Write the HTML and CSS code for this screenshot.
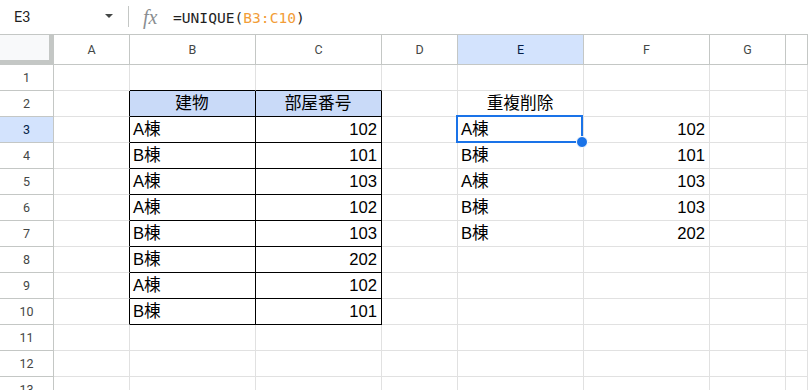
FILE: index.html
```html
<!DOCTYPE html>
<html lang="ja">
<head>
    <meta charset="UTF-8">
    <title>UNIQUE</title>
    <link rel="stylesheet" href="styles.css">
</head>
<body>
    <!-- formula bar -->
    <div class="formula-bar">
        <div class="namebox">
            <span class="cell-ref">E3</span>
            <span class="caret"></span>
        </div>
        <div class="divider"></div>
        <span class="fx">fx</span>
        <span class="formula">=UNIQUE(<span class="ref">B3:C10</span>)</span>
    </div>

    <div class="sheet">
        <div class="corner"></div>
        <div class="colhead">A</div>
        <div class="colhead">B</div>
        <div class="colhead">C</div>
        <div class="colhead">D</div>
        <div class="colhead active">E</div>
        <div class="colhead">F</div>
        <div class="colhead">G</div>
        <div class="colhead"></div>

        <div class="rowhead">1</div>
        <div class="c"></div><div class="c top-edge"></div><div class="c top-edge"></div><div class="c"></div>
        <div class="c"></div><div class="c"></div><div class="c"></div><div class="c"></div>

        <div class="rowhead">2</div>
        <div class="c left-edge"></div><div class="c bd th">建物</div><div class="c bd th">部屋番号</div><div class="c"></div>
        <div class="c center">重複削除</div><div class="c"></div><div class="c"></div><div class="c"></div>

        <div class="rowhead active">3</div>
        <div class="c left-edge"></div><div class="c bd">A棟</div><div class="c bd num">102</div><div class="c"></div>
        <div class="c selected">A棟<div class="sel-box"><span class="handle"></span></div></div><div class="c num">102</div><div class="c"></div><div class="c"></div>

        <div class="rowhead">4</div>
        <div class="c left-edge"></div><div class="c bd">B棟</div><div class="c bd num">101</div><div class="c"></div>
        <div class="c">B棟</div><div class="c num">101</div><div class="c"></div><div class="c"></div>

        <div class="rowhead">5</div>
        <div class="c left-edge"></div><div class="c bd">A棟</div><div class="c bd num">103</div><div class="c"></div>
        <div class="c">A棟</div><div class="c num">103</div><div class="c"></div><div class="c"></div>

        <div class="rowhead">6</div>
        <div class="c left-edge"></div><div class="c bd">A棟</div><div class="c bd num">102</div><div class="c"></div>
        <div class="c">B棟</div><div class="c num">103</div><div class="c"></div><div class="c"></div>

        <div class="rowhead">7</div>
        <div class="c left-edge"></div><div class="c bd">B棟</div><div class="c bd num">103</div><div class="c"></div>
        <div class="c">B棟</div><div class="c num">202</div><div class="c"></div><div class="c"></div>

        <div class="rowhead">8</div>
        <div class="c left-edge"></div><div class="c bd">B棟</div><div class="c bd num">202</div><div class="c"></div>
        <div class="c"></div><div class="c"></div><div class="c"></div><div class="c"></div>

        <div class="rowhead">9</div>
        <div class="c left-edge"></div><div class="c bd">A棟</div><div class="c bd num">102</div><div class="c"></div>
        <div class="c"></div><div class="c"></div><div class="c"></div><div class="c"></div>

        <div class="rowhead">10</div>
        <div class="c left-edge"></div><div class="c bd">B棟</div><div class="c bd num">101</div><div class="c"></div>
        <div class="c"></div><div class="c"></div><div class="c"></div><div class="c"></div>

        <div class="rowhead">11</div>
        <div class="c"></div><div class="c"></div><div class="c"></div><div class="c"></div>
        <div class="c"></div><div class="c"></div><div class="c"></div><div class="c"></div>

        <div class="rowhead">12</div>
        <div class="c"></div><div class="c"></div><div class="c"></div><div class="c"></div>
        <div class="c"></div><div class="c"></div><div class="c"></div><div class="c"></div>

        <div class="rowhead">13</div>
        <div class="c"></div><div class="c"></div><div class="c"></div><div class="c"></div>
        <div class="c"></div><div class="c"></div><div class="c"></div><div class="c"></div>
    </div>
</body>
</html>
```

FILE: styles.css
```css
body {
    margin: 0;
    background: #ffffff;
    font-family: "Liberation Sans", Arial, "Noto Sans CJK JP", sans-serif;
    color: #000;
    overflow: hidden;
}

/* Formula bar */
.formula-bar {
    height: 34px;
    border-bottom: 1px solid #c4c7c5;
    display: flex;
    align-items: center;
}

.namebox {
    width: 128px;
    box-sizing: border-box;
    padding: 0 15px 0 14px;
    display: flex;
    align-items: center;
    justify-content: space-between;
}

.cell-ref {
    font-family: Roboto, "Liberation Sans", sans-serif;
    font-size: 14.5px;
    color: #1f1f1f;
}

.caret {
    width: 0;
    height: 0;
    border-left: 4px solid transparent;
    border-right: 4px solid transparent;
    border-top: 4px solid #444746;
    margin-top: -2px;
}

.divider {
    width: 1px;
    height: 21px;
    background: #c4c7c5;
    margin-top: -1px;
}

.fx {
    font-family: "Liberation Serif", serif;
    font-style: italic;
    font-size: 20px;
    color: #8a8e91;
    margin-left: 14px;
    width: 30px;
}

.formula {
    font-family: "DejaVu Sans Mono", monospace;
    font-size: 14.6px;
    color: #1f1f1f;
}

.ref {
    color: #f29d38;
}

/* Grid */
.sheet {
    display: grid;
    grid-template-columns: 54px 76px 126px 126px 76px 126px 126px 76px 1fr;
    grid-template-rows: 30px repeat(13, 26px);
}

.sheet > div {
    box-sizing: border-box;
}

.corner {
    background: #f8f9fa;
    border-right: 5px solid #c4c7c5;
    border-bottom: 5px solid #c4c7c5;
}

.colhead,
.rowhead {
    font-family: Roboto, "Liberation Sans", sans-serif;
    font-size: 12.5px;
    color: #444746;
    display: flex;
    align-items: center;
    justify-content: center;
    border-right: 1px solid #c4c7c5;
    border-bottom: 1px solid #c4c7c5;
}

.colhead.active,
.rowhead.active {
    background: #d3e3fd;
    color: #041e49;
}

.c {
    border-right: 1px solid #e1e1e1;
    border-bottom: 1px solid #e1e1e1;
    font-size: 16.67px;
    line-height: 25px;
    padding: 0 4px 0 3px;
    white-space: nowrap;
}

.num {
    text-align: right;
}

.center {
    text-align: center;
}

/* bordered table B2:C10 */
.bd {
    border-right-color: #000;
    border-bottom-color: #000;
}

.left-edge {
    border-right-color: #000;
}

.top-edge {
    border-bottom-color: #000;
}

.th {
    background: #c9daf8;
    text-align: center;
}

/* selection on E3 */
.selected {
    position: relative;
}

.sel-box {
    position: absolute;
    top: -2px;
    left: -2px;
    right: 0;
    bottom: -1px;
    border: 2px solid #1a73e8;
}

.handle {
    position: absolute;
    right: -7px;
    bottom: -7px;
    width: 10px;
    height: 10px;
    border-radius: 50%;
    background: #1a73e8;
    border: 1px solid #ffffff;
}
```
